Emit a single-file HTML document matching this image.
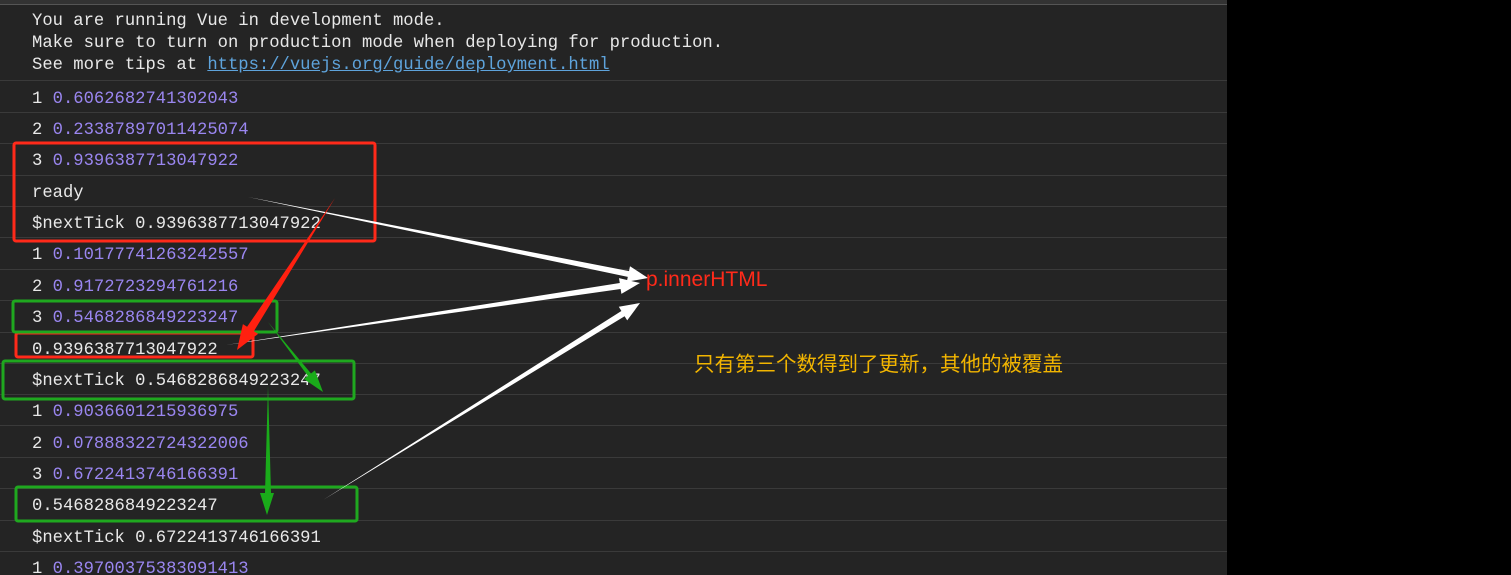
<!DOCTYPE html>
<html><head><meta charset="utf-8"><style>
html,body{margin:0;width:1511px;height:575px;overflow:hidden;}
body{background:#000;position:relative;font-family:"Liberation Mono",monospace;}
#p{position:absolute;left:0;top:0;width:1227px;height:575px;background:#242424;}
.top{position:absolute;left:0;top:0;width:1227px;height:4px;background:#333;border-bottom:1px solid #555;}
.h{position:absolute;left:32px;font-size:17.2px;color:#e8e8e8;line-height:22px;white-space:pre;}
.sep{position:absolute;left:0;width:1227px;height:1px;background:#3a3a3a;}
.r{position:absolute;left:32px;font-size:17.2px;color:#e8e8e8;line-height:31px;height:31px;white-space:pre;}
.n{color:#9a86f0;}
a{color:#5ea3db;text-decoration:underline;}
svg{position:absolute;left:0;top:0;}
</style></head><body>
<div id="p">
<div class="top"></div>
<div class="h" style="top:11px">You are running Vue in development mode.</div>
<div class="h" style="top:33px">Make sure to turn on production mode when deploying for production.</div>
<div class="h" style="top:55px">See more tips at <a>https://vuejs.org/guide/deployment.html</a></div>
<div class="sep" style="top:80px"></div>
<div class="sep" style="top:112px"></div>
<div class="sep" style="top:143px"></div>
<div class="sep" style="top:175px"></div>
<div class="sep" style="top:206px"></div>
<div class="sep" style="top:237px"></div>
<div class="sep" style="top:269px"></div>
<div class="sep" style="top:300px"></div>
<div class="sep" style="top:332px"></div>
<div class="sep" style="top:363px"></div>
<div class="sep" style="top:394px"></div>
<div class="sep" style="top:425px"></div>
<div class="sep" style="top:457px"></div>
<div class="sep" style="top:488px"></div>
<div class="sep" style="top:520px"></div>
<div class="sep" style="top:551px"></div>
<div class="r" style="top:84px">1 <span class="n">0.6062682741302043</span></div>
<div class="r" style="top:115px">2 <span class="n">0.23387897011425074</span></div>
<div class="r" style="top:146px">3 <span class="n">0.9396387713047922</span></div>
<div class="r" style="top:178px">ready</div>
<div class="r" style="top:209px">$nextTick 0.9396387713047922</div>
<div class="r" style="top:240px">1 <span class="n">0.10177741263242557</span></div>
<div class="r" style="top:272px">2 <span class="n">0.9172723294761216</span></div>
<div class="r" style="top:303px">3 <span class="n">0.5468286849223247</span></div>
<div class="r" style="top:335px">0.9396387713047922</div>
<div class="r" style="top:366px">$nextTick 0.5468286849223247</div>
<div class="r" style="top:397px">1 <span class="n">0.9036601215936975</span></div>
<div class="r" style="top:429px">2 <span class="n">0.07888322724322006</span></div>
<div class="r" style="top:460px">3 <span class="n">0.6722413746166391</span></div>
<div class="r" style="top:491px">0.5468286849223247</div>
<div class="r" style="top:523px">$nextTick 0.6722413746166391</div>
<div class="r" style="top:554px">1 <span class="n">0.39700375383091413</span></div>
</div>
<svg width="1511" height="575" viewBox="0 0 1511 575">
<g fill="none" stroke-width="3">
<rect x="14" y="143" width="361" height="98" rx="2" stroke="#ff2a1a"/>
<rect x="16" y="333" width="237" height="24" rx="2" stroke="#ff2a1a"/>
<rect x="13" y="301" width="264" height="31" rx="2" stroke="#1fa81f"/>
<rect x="3" y="361" width="351" height="38" rx="2" stroke="#1fa81f"/>
<rect x="16" y="487" width="341" height="34" rx="2" stroke="#1fa81f"/>
</g>
<g fill="#fff">
<polygon points="248,197 627.8,276.9 626.8,281.8 648,278 630,266.2 629,271.1"/>
<polygon points="226,345 620.6,289 621.4,293.9 640,283 619,278.1 619.8,283"/>
<polygon points="323,500 624.6,316.2 627.2,320.4 640,303 618.8,306.8 621.4,311"/>
</g>
<polygon fill="#ff2010" points="335,198 253.9,331.2 258.1,333.9 237,350 242.9,324.1 247.1,326.8"/>
<g fill="#1aab1a">
<polygon points="268,322 311,373.5 314.9,370.4 323,392 303.9,379 307.8,375.9"/>
<polygon points="268,386 271,493 274,493 267,515 260,493 265,493"/>
</g>
<text x="646" y="286" font-family="Liberation Sans, sans-serif" font-size="21" fill="#ff2a1a">p.innerHTML</text>
<text x="694" y="371" font-family="Liberation Sans, Noto Sans CJK SC, sans-serif" font-size="20.5" fill="#f2b500">只有第三个数得到了更新，其他的被覆盖</text>
</svg>
</body></html>
